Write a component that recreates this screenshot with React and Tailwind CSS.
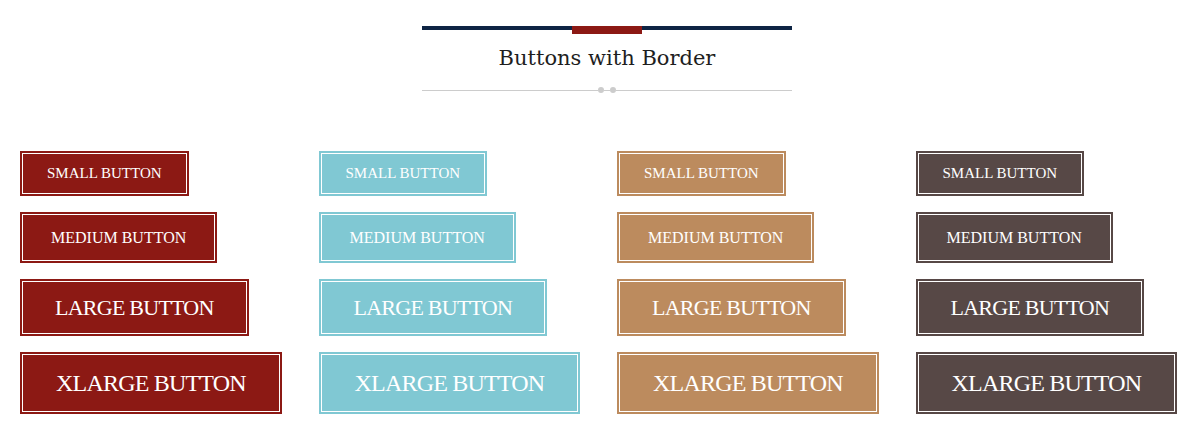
import React from "react";

const serif = { fontFamily: '"Liberation Serif", "DejaVu Serif", serif' };
const titleFont = { fontFamily: '"DejaVu Serif", "Liberation Serif", serif' };

const colors = [
  { name: "red", cls: "bg-[#8c1914] border-[#8c1914]" },
  { name: "cyan", cls: "bg-[#80c8d3] border-[#80c8d3]" },
  { name: "tan", cls: "bg-[#bc8b5e] border-[#bc8b5e]" },
  { name: "brown", cls: "bg-[#574846] border-[#574846]" },
];

const sizes = [
  { label: "SMALL BUTTON", cls: "h-[45px] px-[25px] text-[15px]" },
  { label: "MEDIUM BUTTON", cls: "h-[51px] px-[29px] text-[16px]" },
  { label: "LARGE BUTTON", cls: "h-[57px] px-[33px] text-[22px] tracking-[-0.75px]" },
  { label: "XLARGE BUTTON", cls: "h-[62px] px-[34px] text-[24px] tracking-[-0.8px]" },
];

function Btn({ color, size }) {
  return (
    <button
      className={`flex items-center justify-center border-2 text-white whitespace-nowrap shadow-[inset_0_0_0_1px_#ffffff] ${color.cls} ${size.cls}`}
      style={serif}
    >
      {size.label}
    </button>
  );
}

export default function App() {
  return (
    <div className="w-[1194px] h-[434px] bg-white">
      <div className="pl-5 pt-[26px]">
        <div className="w-[370px] mx-auto">
          <div className="flex items-start">
            <div className="flex-1 h-[4px] bg-[#0e2444]" />
            <div className="w-[70px] h-[8px] bg-[#8c1914]" />
            <div className="flex-1 h-[4px] bg-[#0e2444]" />
          </div>
          <h2
            className="text-center text-[21px] leading-none text-[#1e1e1e] mt-[14px]"
            style={titleFont}
          >
            Buttons with Border
          </h2>
          <div className="flex items-center mt-[18px]">
            <div className="flex-1 h-px bg-[#cccccc]" />
            <div className="w-[6px] h-[6px] rounded-full bg-[#cccccc]" />
            <div className="w-[6px] h-px bg-[#cccccc]" />
            <div className="w-[6px] h-[6px] rounded-full bg-[#cccccc]" />
            <div className="flex-1 h-px bg-[#cccccc]" />
          </div>
        </div>
      </div>
      <div className="grid grid-cols-4 mt-[58px]">
        {colors.map((c) => (
          <div key={c.name} className="pl-5 flex flex-col items-start gap-4">
            {sizes.map((s) => (
              <Btn key={s.label} color={c} size={s} />
            ))}
          </div>
        ))}
      </div>
    </div>
  );
}
